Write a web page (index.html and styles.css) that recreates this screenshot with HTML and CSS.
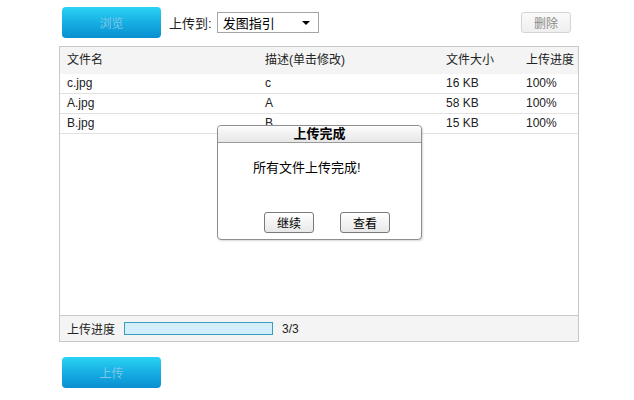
FILE: index.html
```html
<!DOCTYPE html>
<html lang="zh">
<head>
    <meta charset="UTF-8">
    <title>上传文件</title>
    <link rel="stylesheet" href="styles.css">
</head>
<body>
    <div class="page">
        <div class="toolbar">
            <button class="btn-blue">浏览</button>
            <span class="target-label">上传到:</span>
            <div class="select">
                <span>发图指引</span>
                <span class="arrow"></span>
            </div>
            <button class="btn-gray">删除</button>
        </div>

        <div class="grid">
            <div class="row head">
                <div>文件名</div>
                <div>描述(单击修改)</div>
                <div>文件大小</div>
                <div>上传进度</div>
            </div>
            <div class="grid-body">
                <div class="row">
                    <div>c.jpg</div>
                    <div>c</div>
                    <div>16 KB</div>
                    <div>100%</div>
                </div>
                <div class="row">
                    <div>A.jpg</div>
                    <div>A</div>
                    <div>58 KB</div>
                    <div>100%</div>
                </div>
                <div class="row">
                    <div>B.jpg</div>
                    <div>B</div>
                    <div>15 KB</div>
                    <div>100%</div>
                </div>

                <div class="dialog">
                    <div class="dialog-title">上传完成</div>
                    <div class="dialog-msg">所有文件上传完成!</div>
                    <div class="dialog-btns">
                        <button class="btn-small">继续</button>
                        <button class="btn-small">查看</button>
                    </div>
                </div>
            </div>
            <div class="footer">
                <span>上传进度</span>
                <div class="progress"></div>
                <span class="count">3/3</span>
            </div>
        </div>

        <button class="btn-blue upload">上传</button>
    </div>
</body>
</html>
```

FILE: styles.css
```css
body {
    margin: 0;
    font-family: "Liberation Sans", "Noto Sans CJK SC", sans-serif;
    font-size: 12px;
    color: #222;
    background: #fff;
}
.page {
    width: 520px;
    margin-left: 59px;
    padding-top: 7px;
}
.toolbar {
    display: flex;
    align-items: center;
    height: 31px;
}
.btn-blue {
    width: 99px;
    height: 31px;
    margin-left: 3px;
    border: none;
    border-radius: 4px;
    background: linear-gradient(#2ad3f2, #16aee3 50%, #0a8fd0);
    color: #7fc6e6;
    font-family: inherit;
    font-size: 12px;
    padding: 0;
}
.target-label {
    margin-left: 8px;
    font-size: 13px;
}
.select {
    display: flex;
    align-items: center;
    justify-content: space-between;
    height: 19px;
    width: 87px;
    margin-left: 5px;
    border: 1px solid #a5a5a5;
    padding: 0 8px 0 5px;
    font-size: 13px;
    color: #000;
}
.arrow {
    width: 0;
    height: 0;
    border-left: 4px solid transparent;
    border-right: 4px solid transparent;
    border-top: 4px solid #000;
}
.btn-gray {
    margin-left: auto;
    margin-right: 8px;
    width: 50px;
    height: 21px;
    border: 1px solid #d4d4d4;
    border-radius: 3px;
    background: linear-gradient(#fafafa, #efefef);
    color: #8a8a8a;
    font-family: inherit;
    font-size: 12px;
    padding: 0;
}
.grid {
    margin-top: 8px;
    height: 294px;
    border: 1px solid #c8c8c8;
    display: flex;
    flex-direction: column;
}
.row {
    display: grid;
    grid-template-columns: 198px 181px 80px 1fr;
    padding-left: 7px;
    height: 19px;
    line-height: 19px;
    border-bottom: 1px solid #e2e2e2;
}
.row.head {
    height: 27px;
    line-height: 27px;
    background: #f4f4f4;
    border-bottom: none;
}
.grid-body {
    flex: 1;
    position: relative;
}
.footer {
    height: 25px;
    border-top: 1px solid #c8c8c8;
    background: #f4f4f4;
    display: flex;
    align-items: center;
    padding-left: 7px;
}
.progress {
    width: 147px;
    height: 11px;
    margin-left: 9px;
    border: 1px solid #3a9cbf;
    background: #d3eefb;
}
.count {
    margin-left: 9px;
}
.upload {
    margin-top: 15px;
}
.dialog {
    position: absolute;
    left: 157px;
    top: 51px;
    width: 203px;
    height: 113px;
    border: 1px solid #8e8e8e;
    border-radius: 4px;
    background: #fff;
    box-shadow: 1px 1px 2px rgba(0, 0, 0, 0.15);
    display: flex;
    flex-direction: column;
}
.dialog-title {
    height: 16px;
    line-height: 16px;
    text-align: center;
    font-weight: bold;
    font-size: 13px;
    color: #000;
    background: linear-gradient(#fdfdfd, #e6e6e6);
    border-bottom: 1px solid #9a9a9a;
    border-radius: 4px 4px 0 0;
}
.dialog-msg {
    margin: 14px 0 0 35px;
    font-size: 13px;
    color: #000;
}
.dialog-btns {
    display: flex;
    gap: 26px;
    margin: auto 0 6px 46px;
}
.btn-small {
    width: 50px;
    height: 21px;
    border: 1px solid #7a7a7a;
    border-radius: 3px;
    background: linear-gradient(#ffffff, #e8e8e8);
    font-family: inherit;
    font-size: 12px;
    color: #000;
    padding: 0;
}
```
